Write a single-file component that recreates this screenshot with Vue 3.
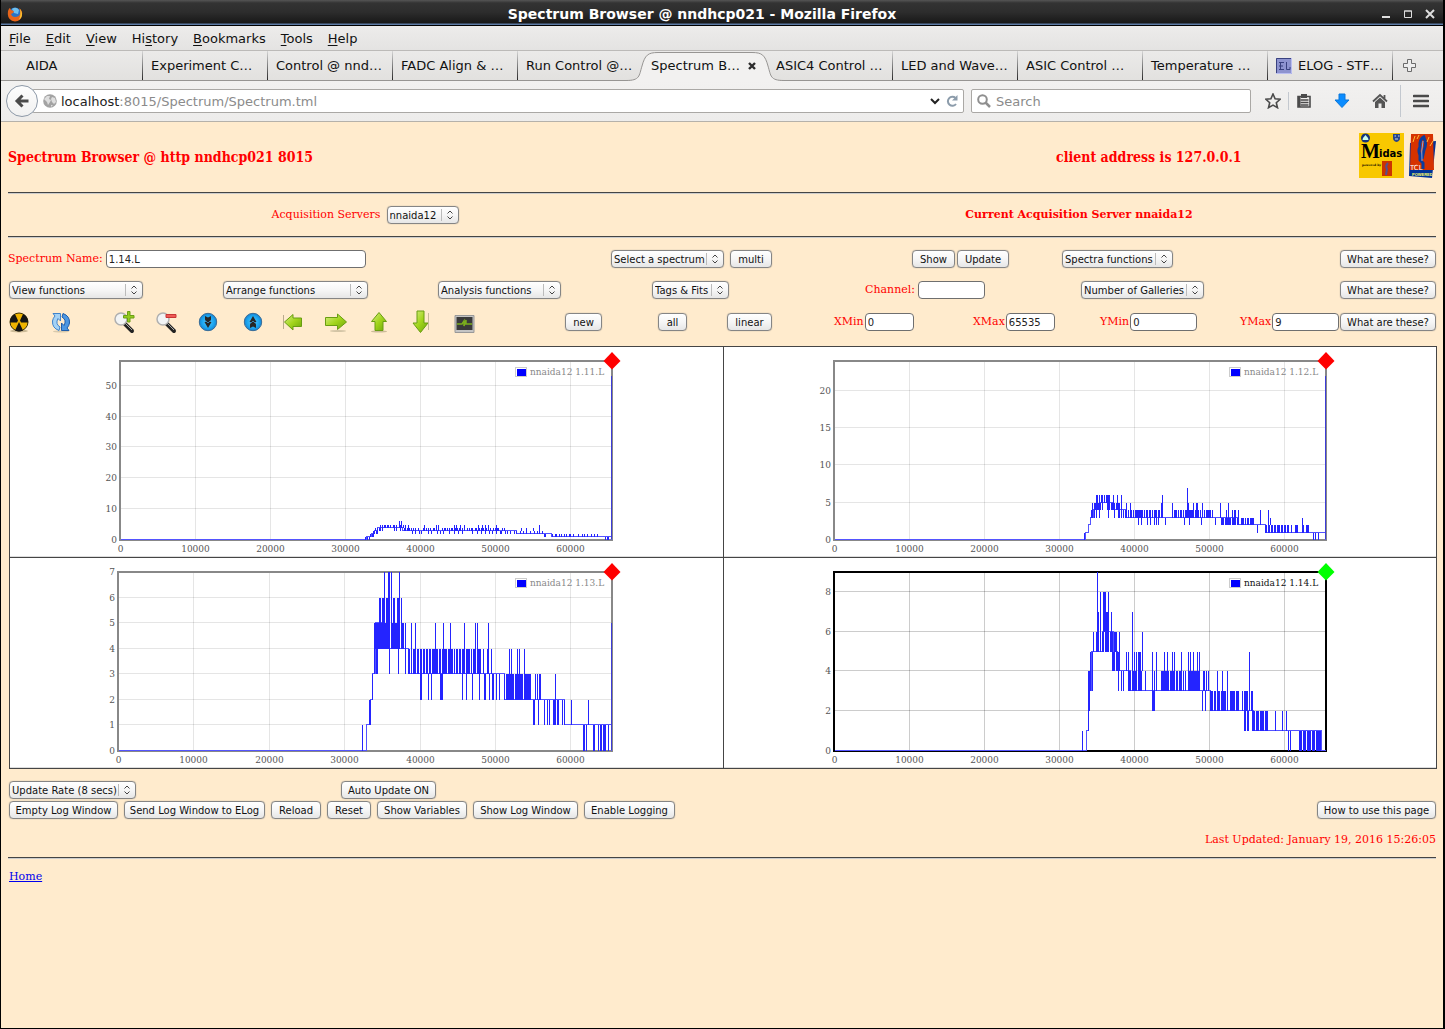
<script setup>
import { ref } from 'vue'

const menus = [
  ['', 'F', 'ile'], ['', 'E', 'dit'], ['', 'V', 'iew'], ['Hi', 's', 'tory'],
  ['', 'B', 'ookmarks'], ['', 'T', 'ools'], ['', 'H', 'elp']
]
const tabs = [
  'AIDA', 'Experiment C…', 'Control @ nnd…', 'FADC Align & …', 'Run Control @…', 'Spectrum B…',
  'ASIC4 Control …', 'LED and Wave…', 'ASIC Control …', 'Temperature …', 'ELOG - STF…'
]
const activeTab = 5

const spectrumName = ref('1.14.L')
const channel = ref('')
const limits = ref([
  { id: 'xmin', label: 'XMin', value: '0', size: 's' },
  { id: 'xmax', label: 'XMax', value: '65535', size: 's' },
  { id: 'ymin', label: 'YMin', value: '0', size: 'm' },
  { id: 'ymax', label: 'YMax', value: '9', size: 'm' }
])
const functionMenus = [
  { text: 'View functions', cls: 'w134' },
  { text: 'Arrange functions', cls: 'w145' },
  { text: 'Analysis functions', cls: 'w123' },
  { text: 'Tags & Fits', cls: 'w77' }
]
const logButtons = [
  ['Empty Log Window', 'b109'], ['Send Log Window to ELog', 'b141'], ['Reload', 'b50'], ['Reset', 'b44'],
  ['Show Variables', 'b90'], ['Show Log Window', 'b105'], ['Enable Logging', 'b91']
]

const TOP = 12
const BOTTOM = 191
const RIGHT = 516

// base: [x, counts] steps of the trace; bars: [low, high, x positions] of single-channel excursions
const charts = [
  {
    name: 'nnaida12 1.11.L', left: 24, max: 58, step: 10, marker: '#f00', edge: 53,
    base: [[24, 0], [270, 1], [275, 2], [278, 3], [281, 4], [306, 3], [408, 3], [420, 2], [448, 2], [455, 1], [515, 0]],
    bars: [
      [0, 1, [269, 271, 273, 509, 511, 512]], [1, 2, [274, 276, 277, 448, 449, 456, 459, 460, 463, 465, 468, 470, 473, 474, 477, 482, 486, 488, 491, 495, 498, 501]],
      [2, 3, [277, 278, 280, 281, 316, 319, 323, 325, 332, 335, 341, 344, 347, 353, 358, 362, 366, 376, 381, 385, 389, 393, 396, 400, 404, 405, 409, 411, 414, 418, 420, 424, 427, 430, 434, 438, 441, 446]],
      [3, 4, [279, 281, 283, 284, 308, 309, 311, 313, 315, 317, 319, 322, 327, 328, 330, 332, 334, 337, 338, 340, 342, 346, 348, 349, 351, 353, 355, 356, 359, 361, 363, 366, 371, 373, 375, 376, 379, 380, 382, 383, 385, 387, 390, 392, 394, 397, 399, 401, 402, 406, 408, 425, 430, 437]],
      [4, 5, [284, 288, 289, 291, 292, 294, 297, 303, 305, 307]], [3, 5, [286, 298, 300, 304, 309, 312, 328, 340, 342, 358, 360, 364, 368, 382, 386, 389, 392, 400]],
      [4, 6, [303, 305]], [2, 5, [443]]
    ]
  },
  {
    name: 'nnaida12 1.12.L', left: 24, max: 24, step: 5, marker: '#f00', edge: 22,
    base: [[24, 0], [275, 1], [278, 2], [280, 3], [283, 4], [290, 5], [302, 4], [315, 3], [428, 2], [455, 1], [515, 0]],
    bars: [
      [3, 4, [281, 282, 284, 286, 304, 309, 311, 313, 315, 316, 318, 321, 323, 325, 326, 327, 328, 329, 330, 331, 332, 334, 336, 339, 340, 342, 344, 345, 346, 349, 351, 362, 364, 365, 366, 368, 370, 371, 373, 375, 376, 377, 378, 380, 381, 382, 383, 385, 387, 388, 390, 392, 394, 396, 397, 398, 399, 400, 402, 416, 418, 424, 428]],
      [3, 5, [282, 284, 304, 308, 311, 316, 320, 351, 362, 378, 383, 386, 387, 392, 410]], [4, 5, [285, 288, 290, 292, 298, 301, 302, 306, 307, 309]],
      [4, 6, [286, 287, 297, 299, 303, 307, 311]], [5, 6, [291, 292, 294, 296]], [3, 6, [289, 298, 352]], [3, 7, [377]],
      [2, 3, [328, 331, 337, 340, 346, 355, 374, 379, 391, 405, 411, 412, 413, 415, 416, 417, 419, 420, 423, 424, 425, 427, 428, 431, 432, 433, 435, 437, 438, 440, 441, 442, 443, 458, 460]],
      [2, 4, [337, 344, 348, 379, 422, 425, 450, 458]], [2, 5, [418]],
      [1, 2, [447, 455, 456, 458, 459, 461, 462, 464, 465, 467, 468, 469, 471, 472, 474, 475, 477, 478, 481, 485, 486, 487, 493, 496, 497, 498]],
      [1, 3, [492]], [0, 1, [274, 503, 505, 508]]
    ]
  },
  {
    name: 'nnaida12 1.13.L', left: 22, max: 7, step: 1, marker: '#f00', edge: 5,
    base: [[22, 0], [270, 1], [274, 2], [276, 3], [279, 5], [285, 4], [312, 3], [408, 2], [468, 1], [515, 0]],
    bars: [
      [0, 1, [266, 487, 488, 490, 497, 498, 502, 504, 505, 507, 508, 509, 512]], [1, 2, [273, 274, 437, 438, 442, 448, 451, 453, 457, 458, 459, 461, 462, 466, 468, 475, 492]],
      [1, 3, [459]], [2, 3, [276, 324, 325, 332, 335, 344, 345, 346, 366, 370, 376, 383, 388, 389, 393, 396, 397, 400, 403, 408, 410, 411, 412, 414, 416, 417, 419, 420, 421, 422, 424, 425, 426, 428, 429, 430, 431, 432, 433, 434, 439, 441, 443, 444]],
      [2, 4, [324, 413, 415, 421, 423, 428]],
      [3, 5, [278, 280, 281, 309, 315, 319, 339, 347, 354, 368, 379, 381, 392]], [4, 5, [279, 282, 283, 285, 289, 296, 299, 300, 306, 307]],
      [4, 6, [283, 284, 286, 287, 290, 291, 297, 298, 301, 303, 305]], [4, 7, [288, 292, 295]], [5, 7, [293, 303]], [3, 6, [293, 302]],
      [3, 4, [309, 312, 313, 315, 317, 318, 319, 321, 322, 324, 325, 327, 328, 330, 331, 333, 334, 336, 337, 338, 340, 341, 343, 344, 346, 348, 349, 350, 352, 353, 355, 356, 358, 360, 361, 363, 364, 366, 367, 368, 370, 371, 372, 373, 375, 377, 378, 379, 381, 382, 383, 384, 387, 391, 395]]
    ]
  },
  {
    name: 'nnaida12 1.14.L', left: 24, max: 9, step: 2, marker: '#0f0', edge: 0, current: true,
    base: [[24, 0], [276, 1], [278, 3], [281, 5], [292, 6], [303, 5], [307, 4], [320, 3], [400, 2], [443, 1], [511, 0]],
    bars: [
      [0, 1, [272, 478, 480, 489, 490, 491, 493, 494, 495, 497, 498, 499, 500, 502, 503, 504, 506, 507, 508, 509, 510]],
      [1, 2, [278, 434, 435, 438, 442, 443, 444, 446, 447, 448, 450, 451, 452, 453, 455, 456, 457, 465, 472, 476]],
      [2, 4, [278, 279, 342, 344, 407, 412, 417]], [3, 5, [280, 282, 308, 324, 326, 328, 329, 330, 342, 346, 354, 357, 362, 364, 371, 378, 380, 383, 387, 389]],
      [5, 6, [283, 286, 288, 292, 295, 300, 305]], [5, 9, [287]], [5, 7, [288, 296, 297, 301]], [5, 8, [290, 293, 298]], [6, 8, [294, 295]],
      [4, 6, [302, 304, 306, 309, 332]], [3, 7, [322]], [4, 5, [303, 307, 316, 318, 332]], [2, 5, [439]],
      [3, 4, [311, 313, 318, 319, 320, 322, 323, 325, 326, 328, 329, 331, 335, 344, 351, 352, 353, 355, 356, 358, 360, 361, 363, 364, 366, 367, 369, 370, 373, 375, 378, 379, 381, 382, 384, 385, 386, 388, 389, 393, 394, 396, 398]],
      [2, 3, [343, 344, 392, 395, 400, 401, 402, 404, 405, 407, 408, 409, 411, 413, 414, 415, 420, 421, 422, 423, 424, 426, 427, 428, 432, 434, 436, 437, 439, 441, 442]],
      [1, 3, [435, 437]]
    ]
  }
]

const yOf = (c, v) => Math.round(BOTTOM - (v / c.max) * (BOTTOM - TOP)) + 0.5
const xOf = (c, v) => Math.round(c.left + (v / 65535) * (RIGHT - c.left)) + 0.5
const yTicks = c => Array.from({ length: Math.floor(c.max / c.step) + 1 }, (_, i) => i * c.step)
const xTicks = [0, 10000, 20000, 30000, 40000, 50000, 60000]
const basePath = c => {
  let d = ''
  c.base.forEach(([x, v], i) => { d += i ? `H${x + 0.5}V${yOf(c, v)}` : `M${x + 0.5} ${yOf(c, v)}` })
  return d + `H${RIGHT}`
}
const barPath = c => c.bars.map(([lo, hi, xs]) => xs.map(x => `M${x + 0.5} ${yOf(c, lo)}V${yOf(c, hi)}`).join('')).join('')
</script>

<template>
  <div class="window">
    <header class="titlebar">
      <svg class="fox" width="16" height="16" viewBox="0 0 16 16">
        <circle cx="8" cy="8" r="6.5" fill="#2a73c4" /><path d="M5 3q4-3 7 1l-1 4-4-1z" fill="#6fc0ee" />
        <path d="M1 5q1-3 2-3l1 2 3 1-1 2-2 1q1 3 4 3 4 0 5-3 1-3-1-6 4 3 3 7-1 6-7 6.500Q1 14.500.8 8z" fill="#e8651a" />
        <path d="M13 3q3 4 1.500 8-1 2-3 3 3-4 1.500-11z" fill="#fbc531" />
      </svg>
      <h1>Spectrum Browser @ nndhcp021 - Mozilla Firefox</h1>
      <div class="wm">
        <button aria-label="Minimize"><svg width="10" height="10"><path d="M1 8h8" stroke="#ddd" stroke-width="2" /></svg></button>
        <button aria-label="Maximize"><svg width="10" height="10"><path d="M1.500 2h7v6.500h-7zM1 2h8" stroke="#ddd" fill="none" /></svg></button>
        <button aria-label="Close"><svg width="10" height="10"><path d="M1 1l8 8M9 1L1 9" stroke="#ddd" stroke-width="2" /></svg></button>
      </div>
    </header>

    <nav class="menubar">
      <button v-for="m in menus" :key="m[2]">{{ m[0] }}<u>{{ m[1] }}</u>{{ m[2] }}</button>
    </nav>

    <div class="tabs">
      <button v-for="(t, i) in tabs" :key="t" class="tab" :class="{ first: i === 0, active: i === activeTab, nosep: i === activeTab - 1 }">
        <svg v-if="i === activeTab" class="shape" width="158" height="30" viewBox="0 0 158 30">
          <path d="M0 29.500C14 29.500 13 25 16 15 19 4 22 1.500 32 1.500H126C136 1.500 139 4 142 15 145 25 144 29.500 158 29.500V30H0z" fill="#f2f1f0" />
          <path d="M0 29.500C14 29.500 13 25 16 15 19 4 22 1.500 32 1.500H126C136 1.500 139 4 142 15 145 25 144 29.500 158 29.500" fill="none" stroke="#979593" />
        </svg>
        <svg v-if="i === 10" class="elog" width="16" height="16"><path d="M0 0h16v16H0z" fill="#8d93cf" /><path d="M0 15.500h15.500V0" stroke="#b9bdf0" fill="none" /><path d="M.5 15V.5H15M3 4.500h5M3 8h4M3 11.500h5M4.500 4.500v7M10.500 4v7.500H14V9" stroke="#39417f" fill="none" /></svg>
        <span>{{ t }}</span>
        <svg v-if="i === activeTab" class="close" width="8" height="8"><path d="M1 1l6 6M7 1L1 7" stroke="#2c2c2c" stroke-width="2.400" /></svg>
      </button>
      <button class="newtab" aria-label="New tab"><svg width="13" height="13"><path d="M4.500.5h4v4h4v4h-4v4h-4v-4h-4v-4h4z" fill="#eee" stroke="#6b6b6b" /></svg></button>
    </div>

    <div class="toolbar">
      <button class="back" aria-label="Back"><svg width="16" height="16"><path d="M14.500 8H4M8.500 2.500L3 8l5.500 5.500" fill="none" stroke="#4a4a4a" stroke-width="3" /></svg></button>
      <div class="urlbox">
        <svg width="14" height="14" viewBox="0 0 14 14"><circle cx="7" cy="7" r="6.800" fill="#a3a3a3" /><path d="M1 5l3-3 3 0-1 3 2 1-1 2-2 3-1-3zM9 3l3 1 1 4-2 2-2-2-1-3zM8 11l2 0-2 2z" fill="#dedede" /></svg>
        <span class="url"><b>localhost</b>:8015/Spectrum/Spectrum.tml</span>
        <svg width="10" height="7"><path d="M1 1l4 4 4-4" fill="none" stroke="#222" stroke-width="2" /></svg>
        <svg class="reload" width="12" height="12"><path d="M10 9A4.500 4.500 0 1 1 9.500 3" fill="none" stroke="#8c9cab" stroke-width="2" /><path d="M11.500 0v5.500H6z" fill="#8c9cab" /></svg>
      </div>
      <div class="search">
        <svg width="14" height="14"><circle cx="5.500" cy="5.500" r="4.300" fill="none" stroke="#8f8f8f" stroke-width="2" /><path d="M8.500 8.500l4.500 4.500" stroke="#8f8f8f" stroke-width="2.500" /></svg>
        <input aria-label="Search" placeholder="Search">
      </div>
      <div class="tools">
        <button aria-label="Bookmark"><svg width="16" height="16"><path d="M8 1l2.100 4.800 5 .5-3.800 3.400 1.200 5L8 12.100 3.500 14.700l1.200-5L.9 6.300l5-.5z" fill="none" stroke="#4a4a4a" stroke-width="1.600" /></svg></button>
        <i class="sep"></i>
        <button aria-label="Bookmarks list"><svg width="16" height="16"><path d="M2 3.500h12v10.500H2zM4.500 7h8M4.500 9.500h8M4.500 12h8" fill="none" stroke="#4a4a4a" stroke-width="1.600" /><path d="M5 1h6v4H5zM2 3h2.500v11H2z" fill="#4a4a4a" /></svg></button>
        <button class="spaced" aria-label="Downloads"><svg width="16" height="16"><path d="M5 1h6v6h4L8 14.500 1 7h4z" fill="#0a8cff" stroke="#0a77da" /></svg></button>
        <button class="spaced" aria-label="Home page"><svg width="16" height="16"><path d="M1 8.500L8 2l7 6.500M12.500 2v4" fill="none" stroke="#555" stroke-width="1.800" /><path d="M3 9l5-4.500L13 9v6H9.500v-4.500h-3V15H3z" fill="#555" /></svg></button>
        <i class="sep tall"></i>
        <button class="app" aria-label="Menu"><svg width="16" height="16"><path d="M1 3h14M1 8h14M1 13h14" stroke="#4a4a4a" stroke-width="2.600" stroke-linecap="round" /></svg></button>
      </div>
    </div>

    <main class="page">
      <div class="heading">
        <h2>Spectrum Browser @ http nndhcp021 8015</h2>
        <h2>client address is 127.0.0.1</h2>
        <div class="logos">
          <svg width="45" height="45" viewBox="0 0 45 45">
            <path d="M0 0h45v45H0z" fill="#f8c800" /><circle cx="6.500" cy="5" r="4.500" fill="#17357c" /><path d="M6.500 2L9 5l.5 2h-6L4 5z" fill="#cfe" />
            <path d="M34 1h7v4q0 3-3.500 4Q34 8 34 5z" fill="#27448c" /><path d="M35.500 3h1.500M39 3h1.500M36 6h3" stroke="#cde" />
            <text x="2" y="25" class="mid-m">M</text><text x="20" y="24" class="mid-r">idas</text><text x="3" y="33" class="mid-p">powered by</text>
            <path d="M23 28h10v15H23z" fill="#c30" /><path d="M29 30q-3 3-1 6l-1 6" stroke="#55508c" fill="none" stroke-width="2" />
          </svg>
          <svg width="28" height="45" viewBox="0 0 28 45">
            <path d="M2 10l26-2-4 37-23-2z" fill="#039" /><path d="M3 1h22l1 36H2z" fill="#d63200" />
            <path d="M17 3q-6 3-5 11-2 4 0 8v5l3 3v6M16 5q3 6 0 12l-2 9" stroke="#0b3c9c" fill="none" stroke-width="3" /><path d="M15 8q-2 10-1 20" stroke="#8da4d7" fill="none" />
            <path d="M7 3l-2 6M11 2L9 6M21 4l-2 5M25 8l-3 5" stroke="#fb3" /><text x="2" y="37" class="tcl">TCL</text><text x="4" y="43" class="pow">POWERED</text>
          </svg>
        </div>
      </div>
      <hr>
      <div class="servers">
        <div><label for="server">Acquisition Servers</label>
          <span class="pick w72"><select id="server"><option>nnaida12</option></select><svg width="16" height="14"><path d="M.5 1v12" stroke="#bbb" /><path d="M6.500 5.500L9 3l2.500 2.500M6.500 8.500L9 11l2.500-2.500" fill="none" stroke="#444" /></svg></span>
        </div>
        <strong>Current Acquisition Server nnaida12</strong>
      </div>
      <hr>

      <div class="row row-a">
        <div class="field"><label for="spectrum">Spectrum Name:</label><input id="spectrum" v-model="spectrumName" class="wide"></div>
        <span class="pick w113"><select aria-label="Select a spectrum"><option>Select a spectrum</option></select><svg width="16" height="14"><path d="M.5 1v12" stroke="#bbb" /><path d="M6.500 5.500L9 3l2.500 2.500M6.500 8.500L9 11l2.500-2.500" fill="none" stroke="#444" /></svg></span>
        <button class="btn b42">multi</button>
        <div class="pair"><button class="btn b43">Show</button><button class="btn b52">Update</button></div>
        <span class="pick w111"><select aria-label="Spectra functions"><option>Spectra functions</option></select><svg width="16" height="14"><path d="M.5 1v12" stroke="#bbb" /><path d="M6.500 5.500L9 3l2.500 2.500M6.500 8.500L9 11l2.500-2.500" fill="none" stroke="#444" /></svg></span>
        <button class="btn b96">What are these?</button>
      </div>

      <div class="row row-b">
        <span v-for="f in functionMenus" :key="f.text" class="pick" :class="f.cls"><select :aria-label="f.text"><option>{{ f.text }}</option></select><svg width="16" height="14"><path d="M.5 1v12" stroke="#bbb" /><path d="M6.500 5.500L9 3l2.500 2.500M6.500 8.500L9 11l2.500-2.500" fill="none" stroke="#444" /></svg></span>
        <div class="field"><label for="channel">Channel:</label><input id="channel" v-model="channel" class="m"></div>
        <span class="pick w123"><select aria-label="Number of Galleries"><option>Number of Galleries</option></select><svg width="16" height="14"><path d="M.5 1v12" stroke="#bbb" /><path d="M6.500 5.500L9 3l2.500 2.500M6.500 8.500L9 11l2.500-2.500" fill="none" stroke="#444" /></svg></span>
        <button class="btn b96">What are these?</button>
      </div>

      <div class="row row-c">
        <svg width="0" height="0" class="defs">
          <linearGradient id="grn" x1="0" y1="0" x2="1" y2="1"><stop offset="0" stop-color="#d9ee8a" /><stop offset=".5" stop-color="#a3d51c" /><stop offset="1" stop-color="#6ba50a" /></linearGradient>
          <radialGradient id="blu"><stop offset="0" stop-color="#55c8ff" /><stop offset=".7" stop-color="#1ba4ee" /><stop offset="1" stop-color="#1683d4" /></radialGradient>
        </svg>
        <button class="icon" aria-label="Zero spectra"><svg viewBox="0 0 22 24"><ellipse cx="11" cy="21" rx="9" ry="1.500" fill="#cbb996" /><circle cx="11" cy="12" r="9" fill="#f0b400" stroke="#3a3000" /><path d="M11 12l-4 8.500a9 9 0 0 0 8 0zM2 12.500Q2 6 7 4l3 6.500-1 2zM20 12.500Q20 6 15 4l-3 6.500 1 2z" fill="#151515" /></svg></button>
        <button class="icon" aria-label="Refresh"><svg viewBox="0 0 22 24"><ellipse cx="11" cy="21.500" rx="8" ry="1" fill="#d8c9ac" /><path d="M9 20.500Q2 18 2.500 11 3 8 5 6L3 3.500h7.500V11L8 8.500Q5 14 10 17z" fill="#a5d2f5" stroke="#3f83cb" /><path d="M13 3.500q7 2.500 6.500 9.500-.5 3-2.500 5l2 2.500h-7.500V13l2.500 2.500Q17 10 12 7z" fill="#4d97e2" stroke="#205da9" /></svg></button>
        <button class="icon" aria-label="Zoom in"><svg viewBox="0 0 22 24"><path d="M12 14l7 7" stroke="#222" stroke-width="4" stroke-linecap="round" /><path d="M13 14l6 6" stroke="#aaa" /><circle cx="8" cy="9" r="6" fill="#f2f4f5" stroke="#b0b0b0" stroke-width="1.500" /><path d="M14.500 1.500h2.500v4h4v2.500h-4v4h-2.500v-4h-4V5.500h4z" fill="#94cc20" stroke="#6b9e14" /></svg></button>
        <button class="icon" aria-label="Zoom out"><svg viewBox="0 0 22 24"><path d="M12 14l7 7" stroke="#222" stroke-width="4" stroke-linecap="round" /><path d="M13 14l6 6" stroke="#aaa" /><circle cx="8" cy="9" r="6" fill="#f2f4f5" stroke="#b0b0b0" stroke-width="1.500" /><path d="M11 4.500h10v3H11z" fill="#ee5a55" stroke="#c73535" /></svg></button>
        <button class="icon" aria-label="Scale down"><svg viewBox="0 0 22 24"><circle cx="11" cy="12" r="8.700" fill="url(#blu)" stroke="#3a6c96" /><path d="M8 6l3 1.500L14 6v3.500L13 12l1.500 0L11 18l-3.500-6H9L8 9.500z" fill="#262626" /><path d="M8.500 10.500l2.500 2.500 2.500-2.500" stroke="#3b7fa8" fill="none" /></svg></button>
        <button class="icon" aria-label="Scale up"><svg viewBox="0 0 22 24"><circle cx="11" cy="12" r="8.700" fill="url(#blu)" stroke="#3a6c96" /><path d="M8 18l3-1.500 3 1.500v-3.500L13 12l1.500 0L11 6l-3.500 6H9l-1 2.500z" fill="#262626" /><path d="M8.500 13.500l2.500-2.500 2.500 2.500" stroke="#3b7fa8" fill="none" /></svg></button>
        <button class="icon" aria-label="Left"><svg viewBox="0 0 22 24"><path d="M1.500 12L10 4.500V8h8.500v8.500H10V20z" fill="url(#grn)" stroke="#699d12" /><path d="M.5 5v14" stroke="#b9aa8d" /></svg></button>
        <button class="icon" aria-label="Right"><svg viewBox="0 0 22 24"><ellipse cx="13" cy="21" rx="8" ry="1" fill="#d3c4a5" /><path d="M21.500 12L12.500 4v3.500H.5v8h12v4z" fill="url(#grn)" stroke="#699d12" /></svg></button>
        <button class="icon" aria-label="Up"><svg viewBox="0 0 22 24"><ellipse cx="9" cy="21.500" rx="8" ry="1" fill="#cbbb99" /><path d="M9 2.500l7.500 9H13v9H5v-9H1.500z" fill="url(#grn)" stroke="#699d12" /></svg></button>
        <button class="icon" aria-label="Down"><svg viewBox="0 0 22 24"><path d="M8.500 22.500L1 13h4V1h7v12h4z" fill="url(#grn)" stroke="#699d12" /><path d="M16.500 3v17" stroke="#c8b999" /></svg></button>
        <button class="icon" aria-label="Monitor"><svg viewBox="0 0 22 24"><path d="M1 5.500h19v17H1z" fill="#c4c4c4" stroke="#999" /><path d="M2.500 7h16v13h-16z" fill="#3a3a3a" /><path d="M3 14h5l2-3v5l2-6v4h6" fill="none" stroke="#7aad1d" stroke-width="1.500" /></svg></button>
        <button class="btn b37">new</button>
        <button class="btn b29">all</button>
        <button class="btn b45">linear</button>
        <div v-for="l in limits" :key="l.id" class="field"><label :for="l.id">{{ l.label }}</label><input :id="l.id" v-model="l.value" :class="l.size"></div>
        <button class="btn b96">What are these?</button>
      </div>

      <div class="gallery">
        <div v-for="c in charts" :key="c.name" class="cell">
          <svg class="chart" :class="{ current: c.current }" width="540" height="208" viewBox="0 0 540 208">
            <g class="grid">
              <path v-for="t in yTicks(c)" :key="t" :d="`M${c.left} ${yOf(c, t)}H${RIGHT}`" />
              <path v-for="t in xTicks" :key="t" :d="`M${xOf(c, t)} ${TOP}V${BOTTOM}`" />
            </g>
            <path class="frame" :d="`M${c.left} ${TOP + 1}H${RIGHT}V${BOTTOM + 1}H${c.left}z`" />
            <path class="base" :d="basePath(c)" />
            <path class="bars" :d="barPath(c)" />
            <path v-if="c.edge" class="edge" :d="`M515.5 ${BOTTOM}V${c.edge > 9 ? 28 : yOf(c, c.edge)}`" />
            <g class="ticks">
              <text v-for="t in yTicks(c)" :key="t" :x="c.left - 3" :y="yOf(c, t) + 3" text-anchor="end">{{ t }}</text>
              <text v-for="t in xTicks" :key="t" :x="xOf(c, t)" y="204" text-anchor="middle">{{ t }}</text>
            </g>
            <path d="M419.500 19.500h11v9h-11z" fill="#fff" stroke="#ccc" /><path d="M421 21h9v7h-9z" fill="#00f" />
            <text class="legend" x="434" y="27">{{ c.name }}</text>
            <path :d="`M516 4l8.500 9-8.500 8.500-8.500-8.500z`" :fill="c.marker" />
          </svg>
        </div>
      </div>

      <div class="update">
        <span class="pick w127"><select aria-label="Update rate"><option>Update Rate (8 secs)</option></select><svg width="16" height="14"><path d="M.5 1v12" stroke="#bbb" /><path d="M6.500 5.500L9 3l2.500 2.500M6.500 8.500L9 11l2.500-2.500" fill="none" stroke="#444" /></svg></span>
        <button class="btn b95">Auto Update ON</button>
      </div>
      <div class="logrow">
        <button v-for="b in logButtons" :key="b[0]" class="btn" :class="b[1]">{{ b[0] }}</button>
        <button class="btn b119 last">How to use this page</button>
      </div>
      <p class="updated">Last Updated: January 19, 2016 15:26:05</p>
      <hr>
      <a class="home" href="#">Home</a>
    </main>
  </div>
</template>

<style>
body { margin: 0; background: #000; }
</style>

<style scoped>
* { box-sizing: border-box; }
button { font: inherit; color: inherit; padding: 0; border: 0; background: none; margin: 0; white-space: nowrap; }
.window { min-height: 100vh; display: flex; flex-direction: column; border: solid #000; border-width: 0 2px 1px 1px; font: 13px "DejaVu Sans", sans-serif; color: #111; background: #ffebcd; }
.titlebar { height: 26px; display: flex; align-items: center; padding: 1px 8px 0 6px; background: linear-gradient(#555 0, #333 3px, #2d2d2d 12px, #181818 23px, #5d7ba5 24px, #5d7ba5 25px, #000 25px); }
.titlebar h1 { flex: 1; margin: 0; text-align: center; font-size: 14px; font-weight: bold; color: #fff; }
.fox { flex: none; }
.wm { display: flex; gap: 12px; }
.wm button, .wm svg { display: block; }
.menubar { height: 25px; display: flex; align-items: center; gap: 15px; padding-left: 8px; border-bottom: 1px solid #bcbab8; background: linear-gradient(#edeceb, #e4e3e2); }
.menubar u { text-underline-offset: 2px; }
.tabs { height: 30px; display: flex; background: linear-gradient(#ebeae9, #e2e1df); border-bottom: 1px solid #979593; }
.tab { position: relative; flex: 0 1 125px; min-width: 0; height: 29px; padding: 0 0 0 8px; display: flex; align-items: center; border-right: 1px solid; border-image: linear-gradient(#ddd, #222) 1; }
.tab.first { flex-basis: 142px; padding-left: 25px; }
.tab.active, .tab.nosep { border-image: none; border-color: transparent; }
.tab span { position: relative; }
.shape { position: absolute; left: -17px; top: 0; z-index: 1; }
.active span { z-index: 2; }
.active { z-index: 2; }
.close { position: relative; z-index: 2; margin-left: 8px; }
.elog { flex: none; margin-right: 6px; }
.newtab { padding-left: 10px; display: flex; align-items: center; }
.toolbar { height: 41px; display: flex; align-items: center; padding: 0 7px 0 5px; border-bottom: 1px solid #b5b1aa; background: linear-gradient(#f2f1f0, #edeceb); }
.back { position: relative; z-index: 1; flex: none; width: 32px; height: 32px; border: 1px solid #8d99a8; border-radius: 50%; background: linear-gradient(#fdfdfd, #f1f1f1); display: flex; align-items: center; justify-content: center; }
.urlbox { flex: 1; height: 24px; margin-left: -6px; padding: 0 5px 0 10px; display: flex; align-items: center; border: 1px solid #aaa8a5; border-radius: 2px; background: #fff; }
.url { flex: 1; padding-left: 4px; color: #8b8b8b; }
.url b { font-weight: normal; color: #222; }
.reload { margin-left: 6px; }
.search { width: 280px; height: 24px; margin-left: 7px; padding-left: 5px; display: flex; align-items: center; gap: 5px; border: 1px solid #aaa8a5; border-radius: 2px; background: #fff; }
.search input { flex: 1; min-width: 0; border: 0; padding: 0; outline: 0; background: none; font: inherit; }
.search input::placeholder { color: #8b8b8b; }
.tools { width: 185px; padding-left: 14px; display: flex; align-items: center; gap: 7px; }
.tools svg { display: block; }
.spaced { margin-left: 15px; }
.app { margin-left: 5px; }
.sep { width: 1px; height: 18px; background: #c3c8cf; }
.sep.tall { height: 32px; margin-left: 5px; }

.page { padding: 0 7px 0 7px; font: 11px/14px "DejaVu Serif", serif; color: #f00; }
.page hr { margin: 0; border: 0; height: 2px; background: linear-gradient(#444 50%, #ccc 50%); }
.heading { height: 70px; display: flex; align-items: center; }
.heading h2 { flex: 1048 1 0; margin: 0; font: bold 14px/18px "DejaVu Serif Condensed", "DejaVu Serif", serif; }
.heading h2 + h2 { flex: 303 1 0; }
.logos { display: flex; gap: 4px; padding-bottom: 3px; }
.logos text { font-family: "DejaVu Serif", serif; font-weight: bold; }
.logos .mid-m { font-size: 20px; font-family: "Liberation Serif", serif; fill: #000; }
.logos .mid-r { font-size: 10px; font-family: "DejaVu Sans", sans-serif; fill: #000; }
.logos .mid-p { font-size: 3px; fill: #000; }
.logos .tcl { font: 7px "DejaVu Sans", sans-serif; fill: #fff; }
.logos .pow { font: bold 4px "Liberation Sans", sans-serif; fill: #ff6; }
.servers { height: 42px; display: grid; grid-template-columns: 1fr 1fr; align-items: center; justify-items: center; }
.servers div { display: flex; align-items: center; gap: 5px; }
.pick { position: relative; display: block; height: 18px; margin-left: 1px; }
.pick select { appearance: none; display: block; width: 100%; height: 18px; padding: 0 0 0 2px; border: 1px solid #858585; border-radius: 4px; background: linear-gradient(#fff, #f6f6f6 50%, #e6e6e6); box-shadow: 0 0 1px #888; font: 10px "DejaVu Sans", sans-serif; color: #111; }
.pick svg { position: absolute; right: 2px; top: 2px; pointer-events: none; }
.btn { height: 18px; border: 1px solid #858585; border-radius: 4px; background: linear-gradient(#fff, #f6f6f6 50%, #e6e6e6); box-shadow: 0 0 1px #888; font: 10px "DejaVu Sans", sans-serif; color: #111; flex: none; }
.w72 { width: 72px; } .w77 { width: 77px; } .w111 { width: 111px; } .w113 { width: 113px; } .w123 { width: 123px; } .w127 { width: 127px; } .w134 { width: 134px; } .w145 { width: 145px; }
.b29 { width: 29px; } .b37 { width: 37px; } .b42 { width: 42px; } .b43 { width: 43px; } .b44 { width: 44px; } .b45 { width: 45px; } .b50 { width: 50px; } .b52 { width: 52px; }
.b90 { width: 90px; } .b91 { width: 91px; } .b95 { width: 95px; } .b96 { width: 96px; } .b105 { width: 105px; } .b109 { width: 109px; } .b119 { width: 119px; } .b141 { width: 141px; }
.row { display: grid; align-items: center; }
.row-a { height: 18px; margin-top: 12px; grid-template-columns: 602fr 120fr 182fr 149fr 279fr 96px; }
.row-b { height: 18px; margin-top: 13px; grid-template-columns: 214fr 215fr 214fr 214fr 215fr 260fr 96px; }
.row-c { height: 24px; margin-top: 11px; grid-template-columns: 42fr 63fr 42fr 42fr 45fr 41fr 42fr 45fr 42fr 42fr 111fr 93fr 69fr 107fr 139fr 127fr 140fr 100fr 96px; }
.defs { position: absolute; }
.field { display: flex; align-items: center; white-space: nowrap; }
.field input { height: 18px; margin-left: 3px; padding: 0 2px; border: 1px solid #6f6f6f; border-radius: 4px; background: #fff; font: 10px "DejaVu Sans", sans-serif; color: #222; }
.row-c .field input { margin-left: 1px; }
.field .wide { width: 260px; }
.field .m { width: 67px; }
.field .s { width: 49px; }
.pair { display: flex; gap: 2px; }
.icon { width: 22px; height: 24px; }
.icon svg { display: block; width: 22px; height: 24px; }
.gallery { margin: 12px -1px 0 1px; display: grid; grid-template-columns: 1fr 1fr; gap: 1px; padding: 1px; background: #454545; }
.cell { display: flex; justify-content: center; padding-top: 1px; border-bottom: 1px solid #ddd; background: #fff; overflow: hidden; }
.chart { display: block; flex: none; overflow: visible; font: 9px "DejaVu Serif", serif; }
.chart path { shape-rendering: crispEdges; }
.chart > path:last-child { shape-rendering: auto; }
.grid path { stroke: #000; stroke-opacity: 0.1; fill: none; }
.current .grid path { stroke-opacity: 0.2; }
.frame { fill: none; stroke: #888; stroke-width: 2px; }
.current .frame { stroke: #000; }
.base { fill: none; stroke: #5454ff; }
.bars { fill: none; stroke: #2424ff; }
.edge { stroke: #3c3cd8; }
.ticks { fill: #555; }
.legend { fill: #888; }
.current .legend { fill: #111; }
.update { display: flex; align-items: center; margin-top: 12px; height: 18px; }
.update .btn { margin-left: 205px; }
.logrow { display: flex; gap: 6px; margin: 2px 0 0 1px; }
.logrow .last { margin-left: auto; }
.updated { margin: 14px 0 10px; text-align: right; }
.home { display: inline-block; margin: 11px 0 0 1px; color: #00e; }
</style>
